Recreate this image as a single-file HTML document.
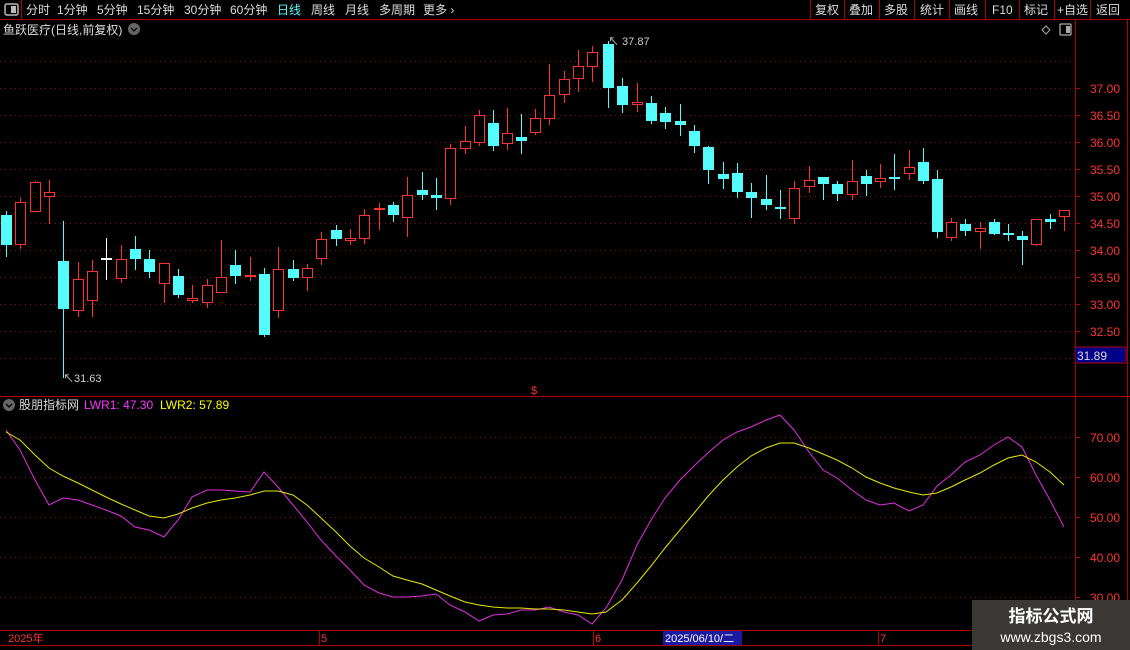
<!DOCTYPE html>
<html><head><meta charset="utf-8"><style>
html,body{margin:0;padding:0;background:#000;width:1130px;height:650px;overflow:hidden}
svg{display:block}
text{font-family:"Liberation Sans","Noto Sans CJK SC",sans-serif}
</style></head><body>
<svg id="s" width="1130" height="650" viewBox="0 0 1130 650" xmlns="http://www.w3.org/2000/svg">
<rect width="1130" height="650" fill="#000"/>
<!-- top toolbar -->
<line x1="0" y1="19.5" x2="1130" y2="19.5" stroke="#b00000"/>
<line x1="21.5" y1="0" x2="21.5" y2="19" stroke="#b00000"/>
<rect x="5" y="4" width="13" height="11" rx="2" fill="none" stroke="#bbb" stroke-width="1.5"/>
<rect x="11" y="6" width="5" height="7" fill="#bbb"/>
<g font-size="12" fill="#ddd">
<text x="26" y="14">分时</text><text x="57" y="14">1分钟</text><text x="97" y="14">5分钟</text>
<text x="137" y="14">15分钟</text><text x="184" y="14">30分钟</text><text x="230" y="14">60分钟</text>
<text x="277" y="14" fill="#54fcfc">日线</text><text x="311" y="14">周线</text><text x="345" y="14">月线</text>
<text x="379" y="14">多周期</text><text x="423" y="14">更多 ›</text>
<text x="815" y="14">复权</text><text x="849" y="14">叠加</text><text x="884" y="14">多股</text>
<text x="920" y="14">统计</text><text x="954" y="14">画线</text><text x="992" y="14">F10</text>
<text x="1024" y="14">标记</text><text x="1057" y="14">+自选</text><text x="1096" y="14">返回</text>
</g>
<g stroke="#b00000">
<line x1="810.5" y1="0" x2="810.5" y2="19"/><line x1="844.5" y1="0" x2="844.5" y2="19"/>
<line x1="879.5" y1="0" x2="879.5" y2="19"/><line x1="914.5" y1="0" x2="914.5" y2="19"/>
<line x1="949.5" y1="0" x2="949.5" y2="19"/><line x1="985.5" y1="0" x2="985.5" y2="19"/>
<line x1="1019.5" y1="0" x2="1019.5" y2="19"/><line x1="1054.5" y1="0" x2="1054.5" y2="19"/>
<line x1="1090.5" y1="0" x2="1090.5" y2="19"/>
</g>
<text x="3" y="34" font-size="12" fill="#ddd">鱼跃医疗(日线,前复权)</text>
<circle cx="134" cy="29" r="6" fill="#666"/><path d="M131 28l3 3 3-3" stroke="#000" fill="none" stroke-width="1.3"/>
<path d="M1046 26l4 4-4 4-4-4z" stroke="#aaa" fill="none"/>
<rect x="1060" y="24" width="11" height="11" rx="1" fill="none" stroke="#aaa" stroke-width="1.3"/><rect x="1066" y="26" width="4" height="7" fill="#aaa"/>
<!-- frame -->
<line x1="1075.5" y1="20" x2="1075.5" y2="630" stroke="#b00000"/>
<line x1="1127.5" y1="20" x2="1127.5" y2="630" stroke="#b00000"/>
<line x1="0" y1="396.5" x2="1130" y2="396.5" stroke="#b00000"/>
<line x1="0" y1="630.5" x2="1130" y2="630.5" stroke="#b00000"/>
<line x1="0" y1="645.5" x2="1130" y2="645.5" stroke="#b00000"/>
<g id="grid" stroke="#8a1010" stroke-dasharray="1 4"></g>
<g id="axis" font-size="12" fill="#ff3333"></g>
<rect x="1075" y="347" width="51" height="16" fill="#000088" stroke="#b00000"/>
<text x="1077" y="360" font-size="12" fill="#ddd">31.89</text>
<g id="candles"></g>
<text x="608" y="45" font-size="11" fill="#ccc">↖ 37.87</text>
<text x="63" y="382" font-size="11" fill="#ccc">↖31.63</text>
<text x="531" y="394" font-size="11" fill="#ff3333">$</text>
<!-- indicator header -->
<circle cx="9" cy="405" r="6" fill="#666"/><path d="M6 404l3 3 3-3" stroke="#000" fill="none" stroke-width="1.3"/>
<text x="19" y="409" font-size="12" fill="#ddd">股朋指标网</text>
<text x="84" y="409" font-size="12" fill="#ff33ff">LWR1: 47.30</text>
<text x="160" y="409" font-size="12" fill="#ffff00">LWR2: 57.89</text>
<polyline id="lm" fill="none" stroke="#e030e0" stroke-width="1"/>
<polyline id="ly" fill="none" stroke="#e8e800" stroke-width="1"/>
<!-- bottom axis -->
<g font-size="11" fill="#ff3333">
<text x="8" y="642">2025年</text><text x="321" y="642">5</text><text x="595" y="642">6</text><text x="880" y="642">7</text>
</g>
<g stroke="#b00000"><line x1="319.5" y1="630" x2="319.5" y2="645"/><line x1="593.5" y1="630" x2="593.5" y2="645"/><line x1="878.5" y1="630" x2="878.5" y2="645"/></g>
<rect x="663" y="631" width="79" height="14" fill="#1a1aa0"/>
<text x="665" y="642" font-size="11" fill="#fff">2025/06/10/二</text>
<!-- watermark -->
<rect x="972" y="600" width="158" height="50" fill="#3b3735"/>
<text x="1051" y="622" font-size="17" font-weight="bold" fill="#fff" text-anchor="middle">指标公式网</text>
<text x="1051" y="642" font-size="14" fill="#fff" text-anchor="middle">www.zbgs3.com</text>
</svg>
<script>
var NS="http://www.w3.org/2000/svg",g=document.getElementById('grid'),ax=document.getElementById('axis');
function el(t,a,p){var e=document.createElementNS(NS,t);for(var k in a)e.setAttribute(k,a[k]);p.appendChild(e);return e;}
var py=[61,88,115,142,169,196,223,250,277,304,331,358];
py.forEach(function(y){el('line',{x1:0,y1:y+.5,x2:1075,y2:y+.5},g);});
var pl=['37.00','36.50','36.00','35.50','35.00','34.50','34.00','33.50','33.00','32.50'];
pl.forEach(function(t,i){var y=88+27*i;var e=el('text',{x:1090,y:y+5},ax);e.textContent=t;el('line',{x1:1075,y1:y+.5,x2:1080,y2:y+.5,stroke:'#b00000'},ax);});
[[70,437],[60,477],[50,517],[40,557],[30,597]].forEach(function(a){el('line',{x1:0,y1:a[1]+.5,x2:1075,y2:a[1]+.5},g);var e=el('text',{x:1090,y:a[1]+5},ax);e.textContent=a[0].toFixed(2);el('line',{x1:1075,y1:a[1]+.5,x2:1080,y2:a[1]+.5,stroke:'#b00000'},ax);});
// x, top, bottom, high, low, color(r/c/w)
var C=[[6,215,245,211,257,'c'],[20,202,245,198,249,'r'],[35,182,212,181,212,'r'],[49,192,197,180,224,'r'],[63,261,309,221,378,'c'],[78,279,311,262,317,'r'],[92,271,301,260,317,'r'],[106,259,259,238,280,'w'],[121,259,279,245,283,'r'],[135,249,259,236,270,'c'],[149,259,272,250,278,'c'],[164,263,284,263,303,'r'],[178,276,295,269,298,'c'],[192,298,301,285,303,'r'],[207,285,303,279,308,'r'],[221,277,293,240,293,'r'],[235,265,276,250,284,'c'],[250,276,276,257,281,'r'],[264,274,335,268,337,'c'],[278,269,311,247,318,'r'],[293,269,278,260,281,'c'],[307,268,278,264,291,'r'],[321,239,259,232,265,'r'],[336,230,239,225,246,'c'],[350,238,241,229,245,'r'],[364,215,239,209,244,'r'],[379,209,209,203,230,'r'],[393,205,215,202,222,'c'],[407,195,218,177,237,'r'],[422,190,195,172,200,'c'],[436,195,198,178,210,'c'],[450,148,199,144,205,'r'],[465,141,149,126,154,'r'],[479,115,143,110,146,'r'],[493,123,146,110,151,'c'],[507,133,144,108,150,'r'],[521,137,141,114,154,'c'],[535,118,133,109,135,'r'],[549,95,119,64,125,'r'],[564,79,95,71,103,'r'],[578,66,79,50,92,'r'],[592,52,67,46,82,'r'],[608,44,88,41,108,'c'],[622,86,105,78,113,'c'],[637,102,105,83,112,'r'],[651,103,121,96,124,'c'],[665,113,122,107,129,'c'],[680,121,125,104,136,'c'],[694,131,146,125,153,'c'],[708,147,170,146,184,'c'],[723,174,179,162,189,'c'],[737,173,192,163,198,'c'],[751,192,198,183,218,'c'],[766,199,205,175,210,'c'],[780,207,209,190,219,'c'],[794,188,219,181,224,'r'],[809,180,187,166,193,'r'],[823,177,184,177,200,'c'],[837,184,194,181,201,'c'],[852,181,195,160,200,'r'],[866,176,184,170,196,'c'],[880,178,182,164,188,'r'],[894,177,179,154,190,'c'],[909,167,174,150,180,'r'],[923,162,181,148,184,'c'],[937,179,232,170,238,'c'],[951,222,238,218,241,'r'],[965,224,231,219,236,'c'],[980,228,232,222,249,'r'],[994,222,234,219,235,'c'],[1008,233,235,224,241,'c'],[1022,236,240,231,265,'c'],[1036,219,245,219,246,'r'],[1050,219,222,214,229,'c'],[1064,210,217,210,231,'r']];
var cg=document.getElementById('candles');
C.forEach(function(c){var x=c[0],col=c[5]=='r'?'#ff3232':c[5]=='c'?'#54fcfc':'#fff';
el('line',{x1:x+.5,y1:c[3],x2:x+.5,y2:c[4],stroke:col},cg);
var h=c[2]-c[1];
if(h<2){el('rect',{x:x-5,y:c[1]-1,width:11,height:2,fill:col},cg);}
else if(c[5]=='r'){el('rect',{x:x-4.5,y:c[1]+.5,width:10,height:h-1,fill:'#000',stroke:col},cg);}
else{el('rect',{x:x-5,y:c[1],width:11,height:h,fill:col},cg);}
});
var M="6,430 20,450 35,480 49,505 63,498 78,500 92,505 106,510 121,516 135,527 149,530 164,537 178,520 192,497 207,490 221,490 235,491 250,492 264,472 278,487 293,505 307,522 321,540 336,556 350,570 364,585 379,593 393,597 407,597 422,596 436,594 450,605 465,612 479,621 493,615 507,614 521,610 535,610 549,607 564,612 578,615 592,624 606,608 622,580 637,545 651,520 665,498 680,480 695,465 709,452 723,440 737,432 751,427 766,420 780,415 794,430 809,452 823,470 837,478 852,490 866,500 880,505 894,503 909,511 923,505 937,486 951,475 965,462 980,455 994,445 1008,437 1022,447 1036,475 1050,500 1064,527";
var Y="6,432 20,440 35,455 49,468 63,476 78,483 92,490 106,497 121,504 135,510 149,516 164,518 178,514 192,508 207,503 221,500 235,498 250,495 264,491 278,491 293,495 307,505 321,518 336,532 350,546 364,558 379,567 393,576 407,580 422,584 436,590 450,596 465,602 479,605 493,607 507,608 521,608 535,609 549,609 564,610 578,612 592,614 606,612 622,600 637,583 651,566 665,548 680,530 695,512 709,495 723,480 737,467 751,456 766,448 780,443 794,443 809,448 823,454 837,460 852,468 866,477 880,483 894,488 909,492 923,495 937,493 951,487 965,480 980,473 994,465 1008,458 1022,455 1036,462 1050,472 1064,485";
document.getElementById('lm').setAttribute('points',M);
document.getElementById('ly').setAttribute('points',Y);
</script>
</body></html>
